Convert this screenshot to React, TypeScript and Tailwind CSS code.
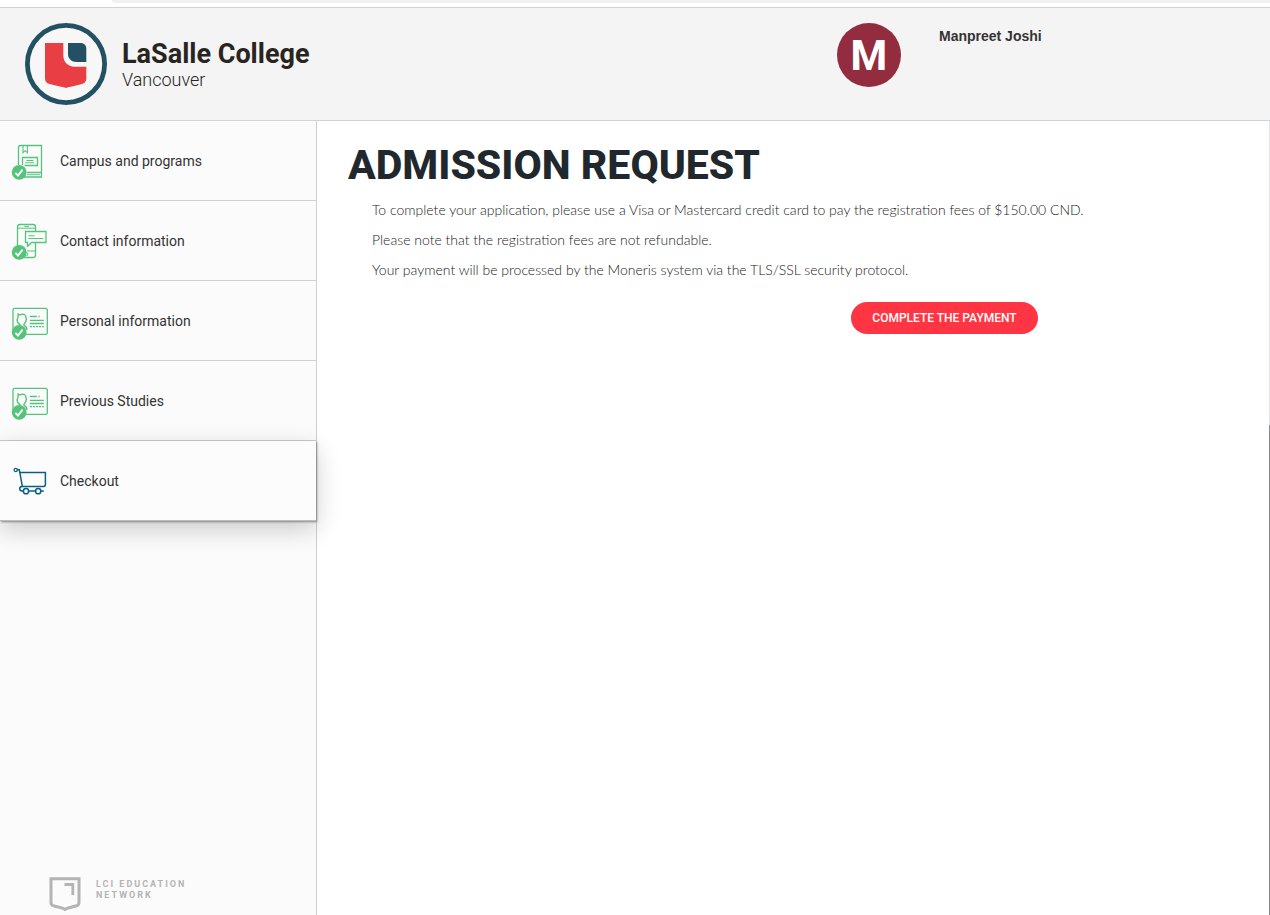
import type { ReactNode } from "react";

type Step = {
  label: string;
  icon: ReactNode;
  active?: boolean;
};

function DoneBadge() {
  return (
    <g>
      <circle cx="9.2" cy="31.3" r="7.4" fill="#55c47b" stroke="none" />
      <path d="M5.4 31.8l2.6 2.8 4.6-6" stroke="#fff" strokeWidth="1.8" />
    </g>
  );
}

function StepIcon({ children, color = "#55c47b" }: { children: ReactNode; color?: string }) {
  return (
    <svg
      viewBox="0 0 40 40"
      className="size-10 shrink-0"
      fill="none"
      stroke={color}
      strokeWidth="1.3"
      aria-hidden="true"
    >
      {children}
    </svg>
  );
}

function BookIcon() {
  return (
    <StepIcon>
      <path d="M8.5 24V6.5q0-2 2-2h21V36H14M31.5 31.5H17" />
      <path d="M17 33.7h13" strokeWidth="1" />
      <path d="M13 4.5v7.2l2.2-2 2.2 2V4.5" strokeWidth="1.1" />
      <path d="M12.5 24v-7.5h15v8h-13" />
      <path d="M16.5 19.5h7M15.3 21.8h8.8" strokeWidth="1" />
      <DoneBadge />
    </StepIcon>
  );
}

function PhoneIcon() {
  return (
    <StepIcon>
      <path d="M7.5 25V6q0-2.5 2.5-2.5h13q2.5 0 2.5 2.5v4M25.5 22v12q0 2.5-2.5 2.5H13" />
      <path d="M7.5 7.2h18M17 30h8.5M14.3 5.4H19" strokeWidth="1" />
      <circle cx="16.3" cy="33.2" r="1.6" strokeWidth="1" />
      <path d="M15.5 10.5H36v11H21.7l-4.2 3.7v-3.7h-2z" fill="#fbfbfb" />
      <path d="M18.3 14.8h6.4M18.3 17.5h15" strokeWidth="1" />
      <DoneBadge />
    </StepIcon>
  );
}

function CardIcon() {
  return (
    <StepIcon>
      <rect x="3" y="7.3" width="34.3" height="26" rx="1.6" />
      <path
        d="M7.8 26.2c2-.7 2.7-1.5 2.2-2.6-1.9-1.1-2.9-3-2.9-5.2 1.4-1 .9-3 1-5.4 1.2.9 2.2 1 3.8.4 2.2-.6 3.9.6 4 2.9.1 1 .7 1.9.3 2.9-.3 1.8-1.2 3-2.4 4.2-.2 1.6 2.9 1.9 3 4v1.5"
        strokeWidth="1.4"
      />
      <path d="M19.8 15.5h7M28.3 15.5h1.4M19.8 19.3h14M19.8 22.5h14" strokeWidth="1.3" />
      <path d="M19.8 25.6h14" strokeWidth="1.3" strokeDasharray="2.2 .8" />
      <DoneBadge />
    </StepIcon>
  );
}

function CartIcon() {
  return (
    <StepIcon color="#0b5f86">
      <circle cx="5.7" cy="9" r="1.6" />
      <path d="M7.3 8.7h2l3.1 17" strokeWidth="1.5" />
      <path d="M9.8 11.6h25.6v12q0 1.9-1.9 1.9H12c-3.1.2-3 4.4 0 4.4h21.8" strokeWidth="1.5" />
      <circle cx="16" cy="30.2" r="2.6" fill="#fcfcfc" strokeWidth="1.5" />
      <circle cx="28.2" cy="30.2" r="2.6" fill="#fcfcfc" strokeWidth="1.5" />
    </StepIcon>
  );
}

const steps: Step[] = [
  { label: "Campus and programs", icon: <BookIcon /> },
  { label: "Contact information", icon: <PhoneIcon /> },
  { label: "Personal information", icon: <CardIcon /> },
  { label: "Previous Studies", icon: <CardIcon /> },
  { label: "Checkout", icon: <CartIcon />, active: true },
];

function Header() {
  return (
    <header className="flex h-[114px] items-start border-y border-[#d2d2d2] bg-[#f4f4f4] pt-[15px] pl-[25px]">
      <a href="#" className="flex gap-[15px]">
        <svg viewBox="0 0 82 82" className="size-[82px] shrink-0" aria-hidden="true">
          <circle cx="41" cy="41" r="38.6" fill="#f7f7f7" stroke="#245064" strokeWidth="4.8" />
          <path
            d="M20 20h18.3v12.5c0 6.5 4.8 11.2 11 11.2h12v11.8c0 3-1.5 4.7-4.3 5.4l-9 2.3c-3 .7-5.2 1-7 1.8-1.8-.8-4-1.1-7-1.8l-9.5-2.3c-3-.8-4.5-2.4-4.5-5.4z"
            fill="#e93e43"
          />
          <path d="M43 20h12.5c3.6 0 5.8 2.2 5.8 5.8V39h-9.8c-5 0-8.5-3.3-8.5-8z" fill="#245064" />
        </svg>
        <span className="flex flex-col pt-[14px] text-[#282521]">
          <span className="text-[27px] leading-[34px] font-bold">LaSalle College</span>
          <span className="text-[18px] leading-[18px] font-light">Vancouver</span>
        </span>
      </a>
      <div className="ml-auto flex w-[433px] gap-[38px]">
        <div className="flex size-16 items-center justify-center rounded-full bg-[#942c40] text-[42px] font-bold text-white">
          M
        </div>
        <span className="pt-[3px] font-['Liberation_Sans',sans-serif] text-sm font-bold text-[#333]">
          Manpreet Joshi
        </span>
      </div>
    </header>
  );
}

function Sidebar() {
  return (
    <aside className="flex w-[317px] shrink-0 flex-col border-r border-[#cfcfcf] bg-[#fbfbfb]">
      <nav>
        {steps.map((step) => (
          <a
            key={step.label}
            href="#"
            aria-current={step.active ? "step" : undefined}
            className={
              step.active
                ? "relative flex h-20 items-center gap-2.5 border-b border-[#bbb] bg-[#fcfcfc] pl-2.5 text-sm text-[#333] shadow-[1px_1px_2px_0_#888,0_8px_24px_rgba(0,0,0,0.2)]"
                : "flex h-20 items-center gap-2.5 border-b border-[#cfcfcf] pl-2.5 text-sm text-[#333]"
            }
          >
            {step.icon}
            <span className="pt-px">{step.label}</span>
          </a>
        ))}
      </nav>
      <div className="mt-auto flex gap-[15px] pb-1 pl-[49px] text-[#b4b4b4]">
        <svg viewBox="0 0 32 34" className="h-[34px] w-8 shrink-0" fill="none" aria-hidden="true">
          <path
            d="M2 1.7h28v23.7c0 1.7-.8 2.7-2.3 3.3L21 30.5c-2 .5-3.7 1-5 1.9-1.3-.9-3-1.4-5-1.9l-6.7-1.8C2.8 28.100 2 27.100 2 25.400z"
            stroke="currentColor"
            strokeWidth="3"
          />
          <path d="M15.5 7.5h8.3V18" stroke="currentColor" strokeWidth="2.8" />
        </svg>
        <p className="pt-[2px] text-[9px] leading-[11px] font-bold tracking-[2px]">
          LCI EDUCATION
          <br />
          NETWORK
        </p>
      </div>
    </aside>
  );
}

export default function App() {
  return (
    <div className="flex min-h-screen flex-col bg-white font-[Roboto,sans-serif]">
      <div className="h-[7px] shrink-0 pl-[112px]">
        <div className="h-[3px] rounded-bl-full bg-[#f0f1f3]" />
      </div>
      <Header />
      <div className="flex grow">
        <Sidebar />
        <main className="min-w-0 grow pt-[18px] pr-8 pl-[31px]">
          <h1 className="text-[41px] leading-[52px] font-extrabold text-[#20282d]">
            ADMISSION REQUEST
          </h1>
          <div className="space-y-[10px] pt-[9px] pl-6 font-[Lato,sans-serif] text-sm leading-5 font-light text-[#222]">
            <p>
              To complete your application, please use a Visa or Mastercard credit card to pay the
              registration fees of $150.00 CND.
            </p>
            <p>Please note that the registration fees are not refundable.</p>
            <p>Your payment will be processed by the Moneris system via the TLS/SSL security protocol.</p>
          </div>
          <div className="flex max-w-[690px] justify-end pt-[22px]">
            <button
              type="button"
              className="h-8 w-[187px] rounded-full bg-[#ff3543] text-xs font-medium text-white"
            >
              COMPLETE THE PAYMENT
            </button>
          </div>
        </main>
        <div className="flex w-px shrink-0 flex-col">
          <div className="h-[304px] bg-[#e3e6f0]" />
          <div className="grow bg-[#8a8a8a]" />
        </div>
      </div>
    </div>
  );
}
